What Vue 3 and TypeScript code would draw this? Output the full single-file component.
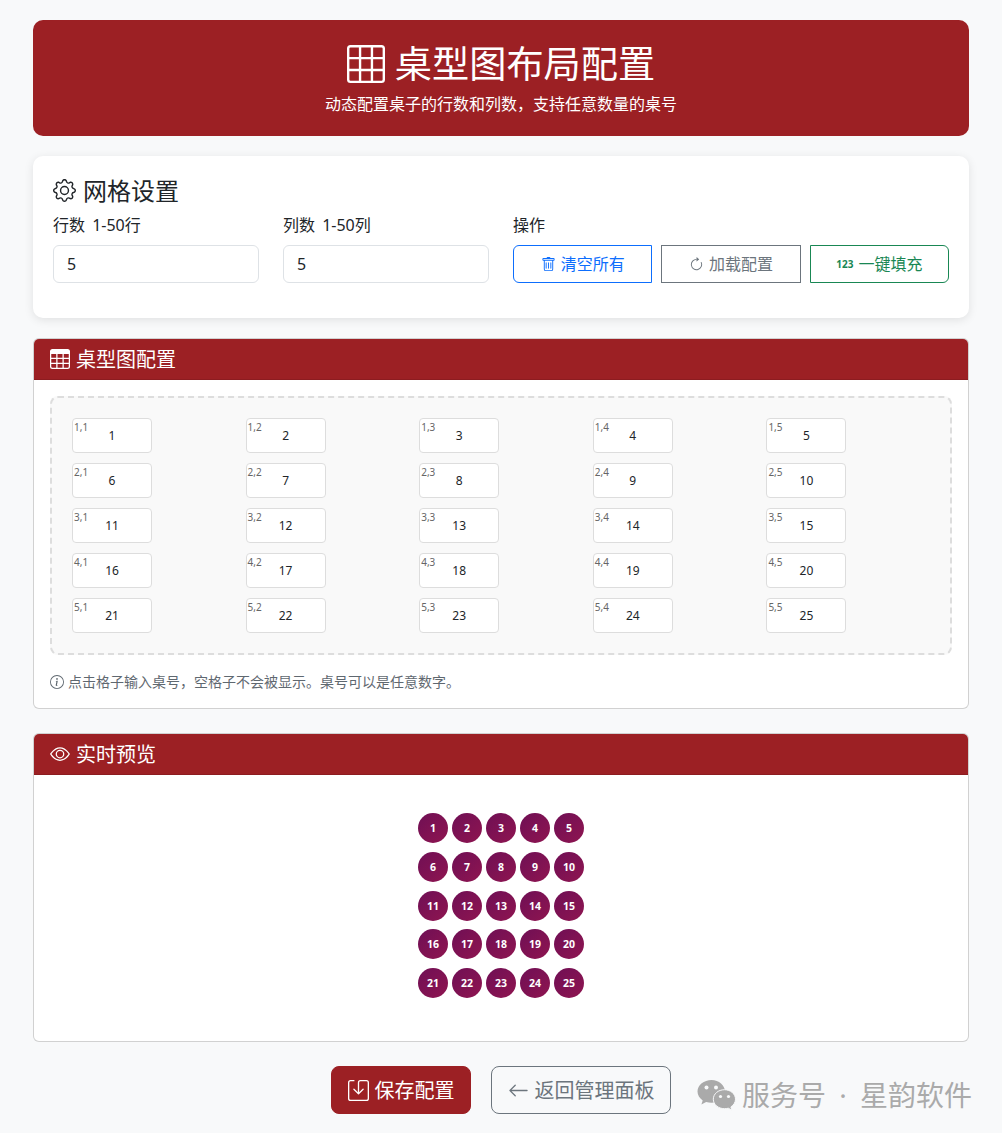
<template>
  <div class="page">
    <header class="hero">
      <h1 class="hero-title">
        <svg class="hero-icon" viewBox="0 0 16 16" fill="currentColor">
          <path d="M0 1.5A1.5 1.5 0 0 1 1.5 0h13A1.5 1.5 0 0 1 16 1.5v13a1.5 1.5 0 0 1-1.5 1.5h-13A1.5 1.5 0 0 1 0 14.5zM1.5 1a.5.5 0 0 0-.5.5V5h4V1zM5 6H1v4h4zm1 4h4V6H6zm-1 1H1v3.5a.5.5 0 0 0 .5.5H5zm1 0v4h4v-4zm5 0v4h3.5a.5.5 0 0 0 .5-.5V11zm0-1h4V6h-4zm0-5h4V1.5a.5.5 0 0 0-.5-.5H11zm-1 0V1H6v4z" />
        </svg>
        桌型图布局配置
      </h1>
      <p class="hero-sub">动态配置桌子的行数和列数，支持任意数量的桌号</p>
    </header>

    <section class="settings">
      <h2 class="settings-title">
        <svg class="settings-icon" viewBox="0 0 16 16" fill="currentColor">
          <path d="M8 4.754a3.246 3.246 0 1 0 0 6.492 3.246 3.246 0 0 0 0-6.492M5.754 8a2.246 2.246 0 1 1 4.492 0 2.246 2.246 0 0 1-4.492 0" />
          <path d="M9.796 1.343c-.527-1.79-3.065-1.79-3.592 0l-.094.319a.873.873 0 0 1-1.255.52l-.292-.16c-1.64-.892-3.433.902-2.54 2.541l.159.292a.873.873 0 0 1-.52 1.255l-.319.094c-1.79.527-1.79 3.065 0 3.592l.319.094a.873.873 0 0 1 .52 1.255l-.16.292c-.892 1.64.901 3.434 2.541 2.54l.292-.159a.873.873 0 0 1 1.255.52l.094.319c.527 1.79 3.065 1.79 3.592 0l.094-.319a.873.873 0 0 1 1.255-.52l.292.16c1.64.893 3.434-.902 2.54-2.541l-.159-.292a.873.873 0 0 1 .52-1.255l.319-.094c1.79-.527 1.79-3.065 0-3.592l-.319-.094a.873.873 0 0 1-.52-1.255l.16-.292c.893-1.64-.902-3.433-2.541-2.54l-.292.159a.873.873 0 0 1-1.255-.52zm-2.633.283c.246-.835 1.428-.835 1.674 0l.094.319a1.873 1.873 0 0 0 2.693 1.115l.291-.16c.764-.415 1.6.42 1.184 1.185l-.159.292a1.873 1.873 0 0 0 1.116 2.692l.318.094c.835.246.835 1.428 0 1.674l-.319.094a1.873 1.873 0 0 0-1.115 2.693l.16.291c.415.764-.42 1.6-1.185 1.184l-.291-.159a1.873 1.873 0 0 0-2.693 1.116l-.094.318c-.246.835-1.428.835-1.674 0l-.094-.319a1.873 1.873 0 0 0-2.692-1.115l-.292.16c-.764.415-1.6-.42-1.184-1.185l.159-.291A1.873 1.873 0 0 0 1.945 8.93l-.319-.094c-.835-.246-.835-1.428 0-1.674l.319-.094A1.873 1.873 0 0 0 3.06 4.377l-.16-.292c-.415-.764.42-1.6 1.185-1.184l.292.159a1.873 1.873 0 0 0 2.692-1.115z" />
        </svg>
        网格设置
      </h2>
      <div class="settings-row">
        <div class="field">
          <label class="field-label">行数 1-50行</label>
          <input v-model.number="rows" class="field-input" />
        </div>
        <div class="field">
          <label class="field-label">列数 1-50列</label>
          <input v-model.number="cols" class="field-input" />
        </div>
        <div class="field field-actions">
          <label class="field-label">操作</label>
          <div class="btn-row">
            <button class="btn btn-blue" @click="clearAll">
              <svg class="btn-icon" viewBox="0 0 16 16" fill="currentColor">
                <path d="M5.5 5.5A.5.5 0 0 1 6 6v6a.5.5 0 0 1-1 0V6a.5.5 0 0 1 .5-.5m2.5 0a.5.5 0 0 1 .5.5v6a.5.5 0 0 1-1 0V6a.5.5 0 0 1 .5-.5m3 .5a.5.5 0 0 0-1 0v6a.5.5 0 0 0 1 0z" />
                <path d="M14.5 3a1 1 0 0 1-1 1H13v9a2 2 0 0 1-2 2H5a2 2 0 0 1-2-2V4h-.5a1 1 0 0 1-1-1V2a1 1 0 0 1 1-1H6a1 1 0 0 1 1-1h2a1 1 0 0 1 1 1h3.5a1 1 0 0 1 1 1zM4.118 4 4 4.059V13a1 1 0 0 0 1 1h6a1 1 0 0 0 1-1V4.059L11.882 4zM2.5 3h11V2h-11z" />
              </svg>
              清空所有
            </button>
            <button class="btn btn-gray" @click="fillAll">
              <svg class="btn-icon" viewBox="0 0 16 16" fill="currentColor">
                <path fill-rule="evenodd" d="M8 3a5 5 0 1 0 4.546 2.914.5.5 0 0 1 .908-.417A6 6 0 1 1 8 2z" />
                <path d="M8 4.466V.534a.25.25 0 0 1 .41-.192l2.36 1.966c.12.1.12.284 0 .384L8.41 4.658A.25.25 0 0 1 8 4.466" />
              </svg>
              加载配置
            </button>
            <button class="btn btn-green" @click="fillAll">
              <span class="num-badge">123</span>
              一键填充
            </button>
          </div>
        </div>
      </div>
    </section>

    <section class="card">
      <div class="card-head">
        <svg class="head-icon" viewBox="0 0 16 16" fill="currentColor">
          <path d="M0 2a2 2 0 0 1 2-2h12a2 2 0 0 1 2 2v12a2 2 0 0 1-2 2H2a2 2 0 0 1-2-2zm15 2h-4v3h4zm0 4h-4v3h4zm0 4h-4v3h3a1 1 0 0 0 1-1zm-5 3v-3H6v3zm-5 0v-3H1v2a1 1 0 0 0 1 1zm-4-4h4V8H1zm0-4h4V4H1zm5-3v3h4V4zm4 4H6v3h4z" />
        </svg>
        桌型图配置
      </div>
      <div class="card-body">
        <div class="grid-box" :style="{ gridTemplateColumns: `repeat(${cols}, 1fr)` }">
          <div v-for="cell in cells" :key="cell.key" class="grid-cell">
            <span class="cell-pos">{{ cell.pos }}</span>
            <input v-model="tables[cell.key]" class="cell-input" />
          </div>
        </div>
        <p class="note">
          <svg class="note-icon" viewBox="0 0 16 16" fill="currentColor">
            <path d="M8 15A7 7 0 1 1 8 1a7 7 0 0 1 0 14m0 1A8 8 0 1 0 8 0a8 8 0 0 0 0 16" />
            <path d="m8.93 6.588-2.29.287-.082.38.45.083c.294.07.352.176.288.469l-.738 3.468c-.194.897.105 1.319.808 1.319.545 0 1.178-.252 1.465-.598l.088-.416c-.2.176-.492.246-.686.246-.275 0-.375-.193-.304-.533zM9 4.5a1 1 0 1 1-2 0 1 1 0 0 1 2 0" />
          </svg>
          点击格子输入桌号，空格子不会被显示。桌号可以是任意数字。
        </p>
      </div>
    </section>

    <section class="card">
      <div class="card-head">
        <svg class="head-icon" viewBox="0 0 16 16" fill="currentColor">
          <path d="M16 8s-3-5.5-8-5.5S0 8 0 8s3 5.5 8 5.5S16 8 16 8M1.173 8a13 13 0 0 1 1.66-2.043C4.12 4.668 5.88 3.5 8 3.5s3.879 1.168 5.168 2.457A13 13 0 0 1 14.828 8q-.086.13-.195.288c-.335.48-.83 1.12-1.465 1.755C11.879 11.332 10.119 12.5 8 12.5s-3.879-1.168-5.168-2.457A13 13 0 0 1 1.172 8z" />
          <path d="M8 5.5a2.5 2.5 0 1 0 0 5 2.5 2.5 0 0 0 0-5M4.5 8a3.5 3.5 0 1 1 7 0 3.5 3.5 0 0 1-7 0" />
        </svg>
        实时预览
      </div>
      <div class="preview-body">
        <div class="preview-grid" :style="{ gridTemplateColumns: `repeat(${cols}, 30px)` }">
          <template v-for="cell in cells" :key="cell.key">
            <span v-if="tables[cell.key]" class="dot">{{ tables[cell.key] }}</span>
            <span v-else class="dot-empty"></span>
          </template>
        </div>
      </div>
    </section>

    <footer class="actions">
      <button class="btn-lg btn-save">
        <svg class="lg-icon" viewBox="0 0 16 16" fill="currentColor">
          <path d="M2 1a1 1 0 0 0-1 1v12a1 1 0 0 0 1 1h12a1 1 0 0 0 1-1V2a1 1 0 0 0-1-1H9.5a1 1 0 0 0-1 1v7.293l2.646-2.647a.5.5 0 0 1 .708.708l-3.5 3.5a.5.5 0 0 1-.708 0l-3.5-3.5a.5.5 0 1 1 .708-.708L7.5 9.293V2a2 2 0 0 1 2-2H14a2 2 0 0 1 2 2v12a2 2 0 0 1-2 2H2a2 2 0 0 1-2-2V2a2 2 0 0 1 2-2h2.5a.5.5 0 0 1 0 1z" />
        </svg>
        保存配置
      </button>
      <button class="btn-lg btn-back">
        <svg class="lg-icon" viewBox="0 0 16 16" fill="currentColor">
          <path fill-rule="evenodd" d="M15 8a.5.5 0 0 0-.5-.5H2.707l3.147-3.146a.5.5 0 1 0-.708-.708l-4 4a.5.5 0 0 0 0 .708l4 4a.5.5 0 0 0 .708-.708L2.707 8.5H14.5A.5.5 0 0 0 15 8" />
        </svg>
        返回管理面板
      </button>
      <div class="watermark">
        <svg class="wm-icon" viewBox="0 0 39 32">
          <path d="M14.500 1C7 1 .5 6 .5 12.500c0 3.600 2 6.700 5.200 8.900l-1.300 4 4.700-2.400c1.800.5 3.600.8 5.400.8 7.500 0 13.500-5.200 13.500-11.300S22 1 14.500 1z" fill="#aaa" />
          <circle cx="9.500" cy="8.500" r="2" fill="#f8f9fa" />
          <circle cx="19" cy="8.500" r="2" fill="#f8f9fa" />
          <path d="M38.500 20.200c0-5.300-5-9.500-11-9.500-6.200 0-11.200 4.200-11.200 9.500s5 9.500 11.200 9.500c1.300 0 2.600-.2 3.800-.5l3.600 2-1-3.300c2.800-1.900 4.600-4.600 4.600-7.700z" fill="#aaa" stroke="#f8f9fa" stroke-width="1" />
          <circle cx="23.500" cy="17.500" r="1.600" fill="#f8f9fa" />
          <circle cx="31.500" cy="17.500" r="1.600" fill="#f8f9fa" />
        </svg>
        <span class="wm-text">服务号 · 星韵软件</span>
      </div>
    </footer>
  </div>
</template>

<script setup lang="ts">
import { ref, computed } from 'vue';

const rows = ref(5);
const cols = ref(5);
const tables = ref<Record<string, string>>({});

const cells = computed(() => {
  const list: { key: string; pos: string }[] = [];
  for (let r = 1; r <= rows.value; r++) {
    for (let c = 1; c <= cols.value; c++) {
      list.push({ key: `${r}-${c}`, pos: `${r},${c}` });
    }
  }
  return list;
});

const clearAll = () => {
  tables.value = {};
};

const fillAll = () => {
  const next: Record<string, string> = {};
  cells.value.forEach((cell, i) => {
    next[cell.key] = String(i + 1);
  });
  tables.value = next;
};

fillAll();
</script>

<style>
body {
  background: #fff;
}
</style>

<style scoped>
.page {
  box-sizing: border-box;
  height: 1133px;
  padding: 20px 33px 0;
  background: #f8f9fa;
  color: #212529;
  font-family: "Noto Sans", "Noto Sans CJK SC", sans-serif;
  font-size: 16px;
  line-height: 24px;
}

.hero {
  height: 116px;
  box-sizing: border-box;
  padding: 20px;
  margin-bottom: 20px;
  border-radius: 10px;
  background: #9c2024;
  color: #fff;
  text-align: center;
}

.hero-title {
  display: flex;
  align-items: center;
  justify-content: center;
  gap: 10px;
  margin: 0 0 6px;
  padding-top: 2px;
  height: 44px;
  font-size: 37.2px;
  font-weight: 400;
  line-height: 44px;
}

.hero-icon {
  width: 38px;
  height: 38px;
}

.hero-sub {
  margin: 0;
  font-size: 16px;
  line-height: 24px;
}

.settings {
  box-sizing: border-box;
  height: 162px;
  padding: 20px;
  margin-bottom: 20px;
  border-radius: 10px;
  background: #fff;
  box-shadow: 0 2px 10px rgba(0, 0, 0, 0.1);
}

.settings-title {
  display: flex;
  align-items: center;
  gap: 7px;
  margin: 0 0 8px;
  font-size: 24px;
  font-weight: 400;
  line-height: 29px;
}

.settings-icon {
  width: 23px;
  height: 23px;
}

.settings-row {
  display: grid;
  grid-template-columns: 206px 206px 1fr;
  gap: 24px;
}

.field-label {
  display: block;
  margin-bottom: 8px;
  word-spacing: 3px;
}

.field-input {
  box-sizing: border-box;
  width: 100%;
  height: 38px;
  padding: 6px 13px;
  border: 1px solid #dee2e6;
  border-radius: 6px;
  background: #fff;
  color: #212529;
  font: inherit;
  outline: none;
}

.btn-row {
  display: grid;
  grid-template-columns: 1fr 1fr 1fr;
  gap: 9px;
}

.btn {
  display: flex;
  align-items: center;
  justify-content: center;
  gap: 5px;
  height: 38px;
  padding: 0;
  border: 1px solid;
  background: transparent;
  font: inherit;
}

.btn-icon {
  width: 15px;
  height: 15px;
}

.btn-blue {
  border-color: #0d6efd;
  border-radius: 6px 0 0 6px;
  color: #0d6efd;
}

.btn-gray {
  border-color: #6c757d;
  color: #6c757d;
}

.btn-green {
  border-color: #198754;
  border-radius: 0 6px 6px 0;
  color: #198754;
}

.num-badge {
  font-size: 10px;
  font-weight: 700;
  line-height: 1;
}

.card {
  margin-bottom: 24px;
  border: 1px solid rgba(0, 0, 0, 0.18);
  border-radius: 6px;
  background: #fff;
  overflow: hidden;
}

.card-head {
  display: flex;
  align-items: center;
  gap: 6px;
  box-sizing: border-box;
  height: 41px;
  padding: 9px 16px 7px;
  border-bottom: 1px solid #8c1c20;
  background: #9c2024;
  color: #fff;
  font-size: 20px;
  line-height: 24px;
}

.head-icon {
  width: 20px;
  height: 20px;
  margin-top: -2px;
}

.card-body {
  padding: 16px;
}

.grid-box {
  display: grid;
  gap: 10px;
  padding: 20px;
  border: 2px dashed #ddd;
  border-radius: 8px;
  background: #f9f9f9;
}

.grid-cell {
  position: relative;
  width: 80px;
  height: 35px;
}

.cell-pos {
  position: absolute;
  top: 3px;
  left: 2px;
  color: #666;
  font-size: 10px;
  line-height: 13px;
}

.cell-input {
  box-sizing: border-box;
  width: 100%;
  height: 100%;
  padding: 0;
  border: 1px solid #ddd;
  border-radius: 4px;
  background: #fff;
  color: #212529;
  font-family: inherit;
  font-size: 12px;
  text-align: center;
  outline: none;
}

.note {
  display: flex;
  align-items: center;
  gap: 4px;
  margin: 16px 0 0;
  color: #5f6870;
  font-size: 14px;
  line-height: 21px;
}

.note-icon {
  width: 14px;
  height: 14px;
}

.preview-body {
  height: 266px;
  box-sizing: border-box;
  padding-top: 38px;
}

.preview-grid {
  display: grid;
  justify-content: center;
  column-gap: 4px;
  row-gap: 8.75px;
}

.dot,
.dot-empty {
  width: 30px;
  height: 30px;
}

.dot {
  display: flex;
  align-items: center;
  justify-content: center;
  border-radius: 50%;
  background: linear-gradient(135deg, #6f0f55, #8f1550);
  color: #fff;
  font-size: 10.5px;
  font-weight: 700;
}

.actions {
  position: relative;
  display: flex;
  justify-content: center;
  gap: 20px;
}

.btn-lg {
  display: flex;
  align-items: center;
  justify-content: center;
  gap: 6px;
  box-sizing: border-box;
  height: 48px;
  padding: 2px 0 0;
  border: 1px solid;
  border-radius: 8px;
  font: inherit;
  font-size: 20px;
}

.lg-icon {
  width: 21px;
  height: 21px;
  margin-top: -2px;
}

.btn-save {
  width: 140px;
  border-color: #9c2024;
  background: #9c2024;
  color: #fff;
}

.btn-back {
  width: 180px;
  border-color: #6c757d;
  background: transparent;
  color: #6c757d;
}

.watermark {
  position: absolute;
  top: 11px;
  right: -3px;
  display: flex;
  align-items: center;
  gap: 6px;
  color: #aaa;
  font-size: 28px;
  line-height: 36px;
  white-space: nowrap;
}

.wm-text {
  word-spacing: 6px;
}

.wm-icon {
  width: 39px;
  height: 32px;
}
</style>
